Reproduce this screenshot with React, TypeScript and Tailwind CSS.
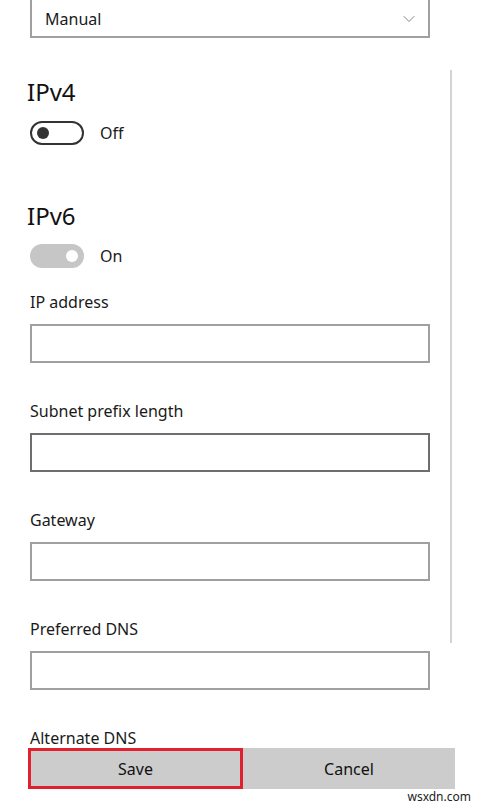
import { ChevronDown } from 'lucide-react'

const FONT = { fontFamily: '"Noto Sans", "Open Sans", sans-serif' }

function Field({ label, dark, className }: { label: string; dark?: boolean; className?: string }) {
  return (
    <div className={className}>
      <div className="h-5 leading-5 text-[16px] text-[#1a1a1a]">{label}</div>
      <div
        className={`mt-3 h-[39px] w-[400px] border-2 bg-white ${dark ? 'border-[#6e6e6e]' : 'border-[#a0a0a0]'}`}
      />
    </div>
  )
}

function Toggle({ on }: { on: boolean }) {
  if (on) {
    return (
      <div className="flex items-center h-6">
        <div className="w-[54px] h-6 rounded-full bg-[#c6c6c6] flex items-center justify-end pr-[6px]">
          <div className="w-3 h-3 rounded-full bg-white" />
        </div>
        <span className="ml-4 text-[16px] text-[#1a1a1a]">On</span>
      </div>
    )
  }
  return (
    <div className="flex items-center h-6">
      <div className="w-[54px] h-6 rounded-full border-2 border-[#333] flex items-center pl-[5px]">
        <div className="w-3 h-3 rounded-full bg-[#333]" />
      </div>
      <span className="ml-4 text-[16px] text-[#1a1a1a]">Off</span>
    </div>
  )
}

export default function App() {
  return (
    <div className="relative w-[483px] h-[805px] overflow-hidden bg-white" style={FONT}>
      {/* scroll indicator */}
      <div className="absolute left-[450px] top-[70px] w-[2px] h-[573px] bg-[#d4d4d4]" />

      <div className="pl-[30px]">
        {/* dropdown */}
        <div className="-mt-[4px] h-[42px] w-[400px] border-2 border-[#a0a0a0] flex items-center justify-between pl-[13px] pr-[9px]">
          <span className="text-[16px] text-[#1a1a1a] pt-1">Manual</span>
          <ChevronDown size={20} strokeWidth={1.1} className="text-[#777] mt-1" />
        </div>

        <div className="mt-[38px] h-8 leading-8 text-[24px] text-[#111] -ml-[3px]">IPv4</div>
        <div className="mt-[13px]">
          <Toggle on={false} />
        </div>

        <div className="mt-[55px] h-8 leading-8 text-[24px] text-[#111] -ml-[3px]">IPv6</div>
        <div className="mt-[12px]">
          <Toggle on />
        </div>

        <Field label="IP address" className="mt-[24px]" />
        <Field label="Subnet prefix length" dark className="mt-[38px]" />
        <Field label="Gateway" className="mt-[38px]" />
        <Field label="Preferred DNS" className="mt-[38px]" />

        <div className="mt-[38px] h-5 leading-5 text-[16px] text-[#1a1a1a]">Alternate DNS</div>
      </div>

      {/* buttons */}
      <div className="ml-[28px] flex w-[427px] h-[41px]">
        <button className="w-[215px] h-full bg-[#cccccc] border-[3px] border-[#e0202e] text-[16px] text-[#111]">
          Save
        </button>
        <button className="flex-1 h-full bg-[#cccccc] text-[16px] text-[#111]">Cancel</button>
      </div>

      <div className="absolute right-[12px] bottom-[2px] text-[12px] leading-none text-[#222]">wsxdn.com</div>
    </div>
  )
}
